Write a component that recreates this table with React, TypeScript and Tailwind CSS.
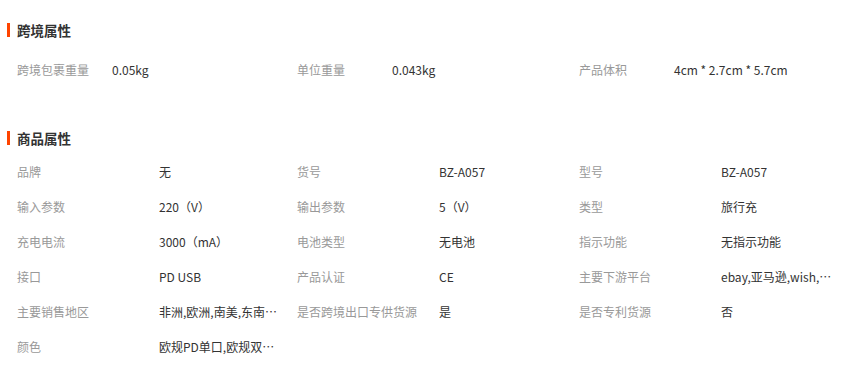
const crossBorder = [
  ['跨境包裹重量', '0.05kg'],
  ['单位重量', '0.043kg'],
  ['产品体积', '4cm * 2.7cm * 5.7cm'],
]

const productAttrs = [
  ['品牌', '无'],
  ['货号', 'BZ-A057'],
  ['型号', 'BZ-A057'],
  ['输入参数', '220（V）'],
  ['输出参数', '5（V）'],
  ['类型', '旅行充'],
  ['充电电流', '3000（mA）'],
  ['电池类型', '无电池'],
  ['指示功能', '无指示功能'],
  ['接口', 'PD USB'],
  ['产品认证', 'CE'],
  ['主要下游平台', 'ebay,亚马逊,wish,速卖通,独立站,LAZADA'],
  ['主要销售地区', '非洲,欧洲,南美,东南亚,北美,东北亚,中东'],
  ['是否跨境出口专供货源', '是'],
  ['是否专利货源', '否'],
  ['颜色', '欧规PD单口,欧规双口,美规PD单口'],
]

function SectionTitle({ title }: { title: string }) {
  return (
    <div className="flex items-center h-[20px]">
      <span className="w-[3px] h-[14px] bg-[#ff4400] ml-[7px] mr-[7px]" />
      <span className="text-[13.5px] font-bold text-[#333]">{title}</span>
    </div>
  )
}

export default function App() {
  return (
    <div
      className="w-[847px] h-[372px] bg-white text-[12px] overflow-hidden"
      style={{ fontFamily: '"Noto Sans CJK SC", "Noto Sans", sans-serif' }}
    >
      <div className="pt-[20px]">
        <SectionTitle title="跨境属性" />
      </div>
      <div className="grid grid-cols-[280px_282px_285px] mt-[20px] pl-[17px]">
        {crossBorder.map(([label, value]) => (
          <div key={label} className="flex h-[20px] items-center">
            <span className="w-[95px] shrink-0 text-[#999] whitespace-nowrap">{label}</span>
            <span className="text-[#333] whitespace-nowrap">{value}</span>
          </div>
        ))}
      </div>

      <div className="mt-[48px]">
        <SectionTitle title="商品属性" />
      </div>
      <div className="grid grid-cols-[280px_282px_285px] mt-[6px] pl-[17px]">
        {productAttrs.map(([label, value]) => (
          <div key={label} className="flex h-[35px] items-center">
            <span className="w-[142px] shrink-0 text-[#999] whitespace-nowrap">{label}</span>
            <span className="max-w-[120px] text-[#333] whitespace-nowrap overflow-hidden text-ellipsis">
              {value}
            </span>
          </div>
        ))}
      </div>
    </div>
  )
}
